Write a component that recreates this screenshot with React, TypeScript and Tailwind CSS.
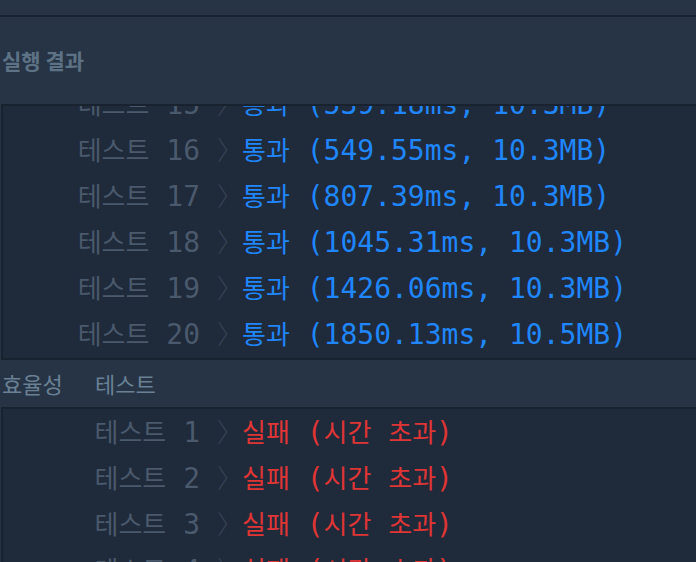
const mono = "font-['DejaVu_Sans_Mono','Liberation_Mono','Noto_Sans_CJK_KR',monospace]";

type Row = { no: number; ok: boolean; ms?: string; mb?: string };

const accuracyRows: Row[] = [
    { no: 15, ok: true, ms: "539.18", mb: "10.3" },
    { no: 16, ok: true, ms: "549.55", mb: "10.3" },
    { no: 17, ok: true, ms: "807.39", mb: "10.3" },
    { no: 18, ok: true, ms: "1045.31", mb: "10.3" },
    { no: 19, ok: true, ms: "1426.06", mb: "10.3" },
    { no: 20, ok: true, ms: "1850.13", mb: "10.5" },
];

const efficiencyRows: Row[] = [
    { no: 1, ok: false },
    { no: 2, ok: false },
    { no: 3, ok: false },
    { no: 4, ok: false },
];

const Ko = ({ children }: { children: string }) => (
    <span className="font-['Noto_Sans_CJK_KR',sans-serif] text-[26px]">{children}</span>
);

const ResultRow = ({ row }: { row: Row }) => {
    return (
        <div className={`flex h-[46px] items-center whitespace-pre leading-[46px] text-[28px] ${mono}`}>
            <div className="w-[197px] shrink-0 text-right text-[#4a596b]">
                <Ko>테스트</Ko>
                <span>{` ${row.no}`}</span>
            </div>
            <div className="w-[42px] shrink-0 pl-[17px] text-[#364354]">
                <span className="font-['Noto_Sans_CJK_KR',sans-serif] text-[26px] font-light">〉</span>
            </div>
            {row.ok ? (
                <div className="text-[#1f86fb]">
                    <Ko>통과</Ko>
                    <span>{` (${row.ms}ms, ${row.mb}MB)`}</span>
                </div>
            ) : (
                <div className="text-[#df3535]">
                    <Ko>실패</Ko>
                    <span> (</span>
                    <Ko>시간</Ko>
                    <span> </span>
                    <Ko>초과</Ko>
                    <span>)</span>
                </div>
            )}
        </div>
    );
};

export default function App() {
    return (
        <div className="h-[562px] w-[696px] overflow-hidden bg-[#263445] font-['Noto_Sans_CJK_KR','Noto_Sans',sans-serif]">
            <div className="h-[17px] border-b-2 border-[#1a2332]" />
            <div className="flex h-[87px] items-center pl-[2px] pt-px text-[21px] font-bold text-[#5e7285]">
                실행 결과
            </div>
            {/* 정확성 테스트 (scrolled) */}
            <div className="ml-px h-[256px] w-[720px] overflow-hidden border-y-2 border-l-2 border-[#19222f] bg-[#1f2a3b]">
                <div className="-mt-[25px]">
                    {accuracyRows.map((row) => (
                        <ResultRow key={row.no} row={row} />
                    ))}
                </div>
            </div>
            <div className="flex h-[47px] items-center pl-[2px] text-[22px] text-[#6a8195]">
                <span className="w-[93px]">효율성</span>
                <span>테스트</span>
            </div>
            <div className="ml-px w-[720px] border-t-2 border-l-2 border-[#19222f] bg-[#1f2a3b]">
                {efficiencyRows.map((row) => (
                    <ResultRow key={row.no} row={row} />
                ))}
            </div>
        </div>
    );
}
